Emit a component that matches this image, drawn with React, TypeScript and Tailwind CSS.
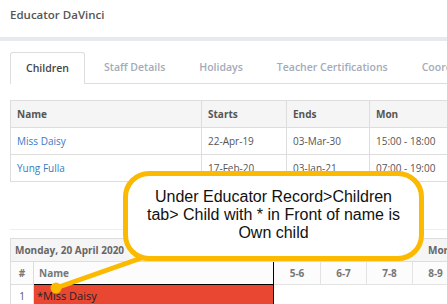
const tabs = ["Staff Details", "Holidays", "Teacher Certifications", "Coordinators"];

const children = [
  { name: "Miss Daisy", starts: "22-Apr-19", ends: "03-Mar-30", mon: "15:00 - 18:00" },
  { name: "Yung Fulla", starts: "17-Feb-20", ends: "03-Jan-21", mon: "07:00 - 19:00" },
];

const hours = ["5-6", "6-7", "7-8", "8-9"];

function ChildrenTable() {
  return (
    <div className="mt-[16px] w-[460px] border-l border-t border-[#ddd] text-[10px]">
      <div className="grid h-[27px] grid-cols-[191px_85px_83px_101px] bg-[#f5f5f5] font-bold text-[#555]">
        {["Name", "Starts", "Ends", "Mon"].map((h) => (
          <div key={h} className="flex items-center border-b border-r border-[#ddd] pl-[6px]">
            {h}
          </div>
        ))}
      </div>
      {children.map((c) => (
        <div key={c.name} className="grid h-[27px] grid-cols-[191px_85px_83px_101px] text-[#555]">
          <div className="flex items-center border-b border-r border-[#ddd] pl-[6px] text-[#3a7bbf]">{c.name}</div>
          <div className="flex items-center border-b border-r border-[#ddd] pl-[6px]">{c.starts}</div>
          <div className="flex items-center border-b border-r border-[#ddd] pl-[6px]">{c.ends}</div>
          <div className="flex items-center border-b border-r border-[#ddd] pl-[6px]">{c.mon}</div>
        </div>
      ))}
    </div>
  );
}

function DayTable() {
  return (
    <div className="mt-[8px] w-[460px] border-l border-t border-[#ddd] text-[10px]">
      <div className="flex h-[23px] bg-[#f5f5f5] font-bold text-[#666]">
        <div className="flex w-[263px] items-center border-b border-r border-[#ddd] pl-[4px]">
          Monday, 20 April 2020
        </div>
        <div className="flex flex-1 items-center border-b border-[#ddd] pl-[166px]">Morning</div>
      </div>
      <div className="flex h-[23px] bg-[#fcfcfc] font-bold text-[#777]">
        <div className="flex w-[23px] items-center justify-center border-b border-r border-[#ddd]">#</div>
        <div className="flex w-[240px] items-center border-b border-r border-black pl-[5px]">Name</div>
        {hours.map((h, i) => (
          <div
            key={h}
            className={`flex items-center justify-center border-b border-r border-[#e3e3e3] ${i === 0 ? "w-[47px]" : "w-[46px]"}`}
          >
            {h}
          </div>
        ))}
      </div>
      <div className="flex h-[23px] text-[#222]">
        <div className="flex w-[23px] items-center justify-center border-r border-[#ddd] text-[#555]">1</div>
        <div className="flex w-[240px] items-center border-r border-black bg-[#ea4733] pl-[3px] text-[11px]">
          *Miss Daisy
        </div>
        <div className="flex-1 bg-white" />
      </div>
    </div>
  );
}

export default function App() {
  return (
    <div className="relative h-[304px] w-[447px] overflow-hidden bg-white font-['Open_Sans',sans-serif]">
      <div className="h-[37px] pl-[10px] pt-[6px] text-[11.5px] font-semibold text-[#555]">Educator DaVinci</div>
      <div className="h-[4px] bg-[#e6e9ed]" />

      <div className="pl-[10px]">
        <div className="mt-[11px] flex h-[32px] w-[460px] border-b border-[#ddd] text-[10.5px] font-semibold">
          <div className="-mb-px flex items-center rounded-t-[3px] border border-b-0 border-[#ddd] bg-white px-[15px] text-[#444]">
            Children
          </div>
          {tabs.map((t) => (
            <div key={t} className="ml-[4px] flex items-center whitespace-nowrap px-[15px] text-[#a3abba]">
              {t}
            </div>
          ))}
        </div>

        <ChildrenTable />

        <div className="mt-[47px] h-px w-[460px] bg-[#eee]" />

        <DayTable />
      </div>

      <svg className="pointer-events-none absolute left-0 top-0" width="447" height="304" viewBox="0 0 447 304">
        <line x1="150" y1="255" x2="56" y2="288" stroke="#fbb900" strokeWidth="5" strokeLinecap="round" />
        <circle cx="56" cy="288" r="5.5" fill="#fbb900" />
      </svg>

      <div className="absolute left-[123px] top-[171px] flex h-[90px] w-[301px] flex-col items-center rounded-[26px] border-[5px] border-[#fbb900] bg-white pt-[12px] font-['Liberation_Sans',Arial,sans-serif] text-[16px] leading-[18px] text-[#111]">
        <span>Under Educator Record&gt;Children</span>
        <span>tab&gt; Child with * in Front of name is</span>
        <span>Own child</span>
      </div>
    </div>
  );
}
